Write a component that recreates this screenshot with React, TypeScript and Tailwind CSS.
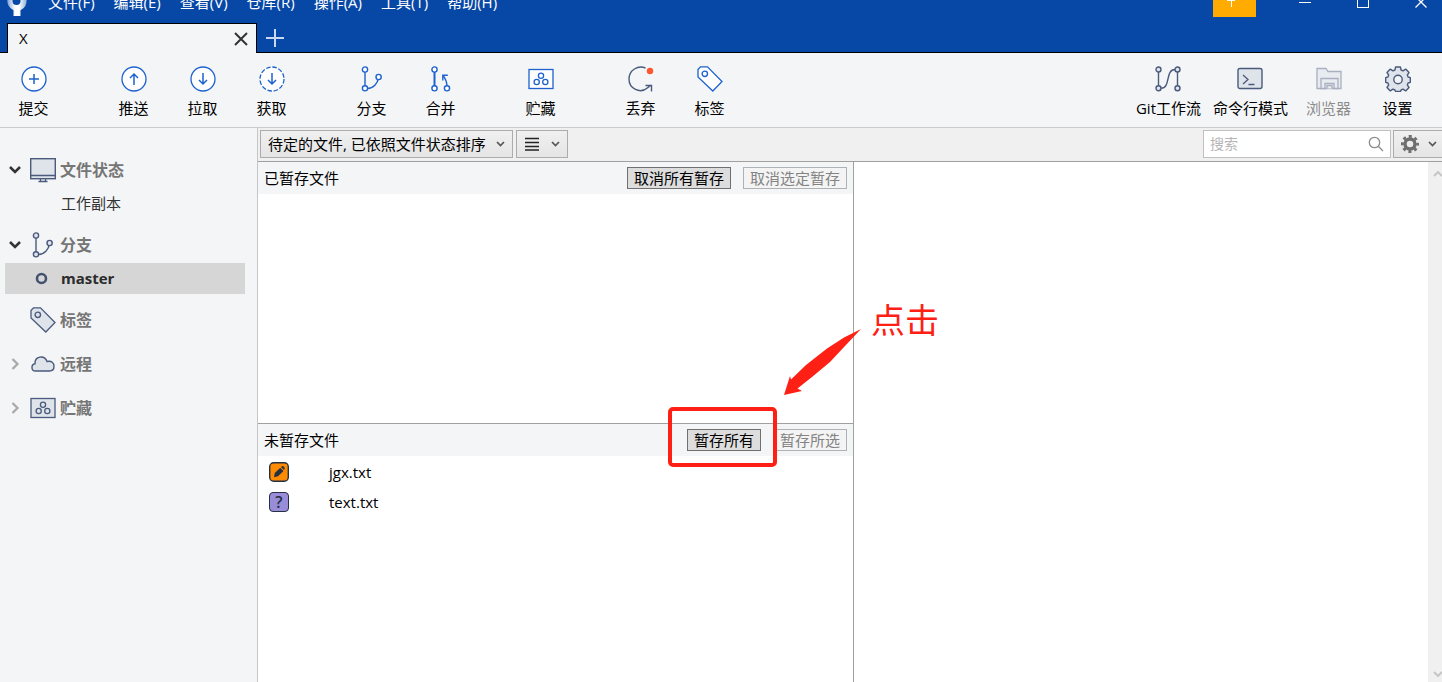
import type { ReactNode } from "react";

const BLUE = "#1e62cf";
const SLATE = "#4a5a7c";
const PALE = "#dfe3ea";

type IconProps = { color?: string; fill?: string };

function Svg({ children, size = 26 }: { children: ReactNode; size?: number }) {
  return (
    <svg width={size} height={size} viewBox={`0 0 ${size} ${size}`} fill="none" aria-hidden="true" className="shrink-0">
      {children}
    </svg>
  );
}

function CircleIcon({ d, dashed = false }: { d: string; dashed?: boolean }) {
  return (
    <Svg>
      <circle cx="13" cy="13" r="12" fill="#fff" stroke={BLUE} strokeWidth="1.3" strokeDasharray={dashed ? "4.5 1.78" : undefined} />
      <path d={d} stroke={BLUE} strokeWidth="1.5" />
    </Svg>
  );
}

function BranchIcon({ color = BLUE, fill = "#fff" }: IconProps) {
  return (
    <Svg>
      <g stroke={color} strokeWidth="1.4">
        <path d="M6 6v14M8.500 22.500c6 0 10-5 11-10.500" />
        <circle cx="6" cy="3.500" r="2.600" fill={fill} />
        <circle cx="6" cy="22.300" r="2.600" fill={fill} />
        <circle cx="19.600" cy="11" r="2.600" fill={fill} />
      </g>
    </Svg>
  );
}

function MergeIcon() {
  return (
    <Svg>
      <g stroke={BLUE} strokeWidth="1.4">
        <path d="M6.500 6v14" strokeWidth="2" />
        <path d="M19 20c-.2-4-1.500-7.500-4-10.500M14.800 14.500V9.300h5" />
        <circle cx="6.500" cy="3.500" r="2.600" fill="#fff" />
        <circle cx="6.500" cy="22.300" r="2.600" fill="#fff" />
        <circle cx="19" cy="22.300" r="2.600" fill="#fff" />
      </g>
    </Svg>
  );
}

function StashIcon({ color = BLUE, fill = "#fff" }: IconProps) {
  return (
    <Svg>
      <g stroke={color} strokeWidth="1.3">
        <rect x="1" y="3.500" width="24" height="19" fill={fill} />
        <circle cx="13" cy="9.700" r="2.600" />
        <circle cx="8.700" cy="16" r="2.600" />
        <circle cx="17.300" cy="16" r="2.600" />
      </g>
    </Svg>
  );
}

function DiscardIcon() {
  return (
    <Svg>
      <path d="M17.500 2C10-1 1 4 1 13c0 9.500 11 15.500 19 8.500l3-2.500M17.500 19.500h6v6" stroke={SLATE} strokeWidth="1.4" />
      <circle cx="22" cy="5" r="3.200" fill="#ff5630" />
    </Svg>
  );
}

function TagIcon({ color = BLUE, fill = "#fff" }: IconProps) {
  return (
    <Svg>
      <path d="M1 3.500 3.500.8h7L25 15.500 15.800 25 1 11z" fill={fill} stroke={color} strokeWidth="1.3" />
      <circle cx="7.800" cy="7.800" r="2.700" stroke={color} strokeWidth="1.400" />
    </Svg>
  );
}

function FlowIcon() {
  return (
    <Svg>
      <g stroke={SLATE} strokeWidth="1.4">
        <path d="M3.500 6v14M22.500 6v14M6 22.300c10 0 4-18.800 14-18.800" />
        <circle cx="3.500" cy="3.500" r="2.500" fill={PALE} />
        <circle cx="3.500" cy="22.300" r="2.500" fill={PALE} />
        <circle cx="22.500" cy="3.500" r="2.500" fill={PALE} />
        <circle cx="22.500" cy="22.300" r="2.500" fill={PALE} />
      </g>
    </Svg>
  );
}

function TerminalIcon() {
  return (
    <Svg>
      <rect x="1" y="2.500" width="24" height="20" rx="2" fill={PALE} stroke={SLATE} strokeWidth="1.4" />
      <path d="M6 9l5 4.500L6 18M11.500 18.500h6" stroke={SLATE} strokeWidth="1.3" />
    </Svg>
  );
}

function ExplorerIcon() {
  return (
    <Svg>
      <g fill="#e8ebf0" stroke="#a9b0bf" strokeWidth="1.3">
        <path d="M1 22.500V2.500h9l2 3h13v17z" />
        <path d="M5 22.500v-10h17v10h-4v-5h-9v5z" />
        <path d="M11 22.500v-3h5v3" />
      </g>
    </Svg>
  );
}

function CogIcon() {
  const d =
    "M10.600 1h4.800l.7 3 1.900.8 2.700-1.700 3.300 3.400-1.700 2.600.8 1.900 2.200.7v4.600l-2.200.7-.8 1.900 1.700 2.600-3.300 3.400-2.700-1.700-1.900.8-.7 1.500h-4.800l-.7-1.500-1.900-.8-2.700 1.700L2 21.500l1.700-2.600-.8-1.900-2.200-.7v-4.600l2.200-.7.8-1.900L2 6.500l3.300-3.400L8 4.800 9.900 4z";
  return (
    <Svg>
      <path d={d} fill={PALE} stroke={SLATE} strokeWidth="1.400" strokeLinejoin="round" />
      <circle cx="13" cy="13.500" r="4.200" fill="#f4f5f7" stroke={SLATE} strokeWidth="1.400" />
    </Svg>
  );
}

function MonitorIcon() {
  return (
    <Svg>
      <rect x=".7" y="1.700" width="24.600" height="20" fill={PALE} stroke={SLATE} strokeWidth="1.4" />
      <path d="M1 18.500h24M8.500 24.500h9M10.500 22v2M15.500 22v2" stroke={SLATE} strokeWidth="1.300" />
    </Svg>
  );
}

function CloudIcon() {
  return (
    <Svg>
      <path
        d="M5.500 20C1 20 .8 13.500 5 12.800 4.500 5 14.500 3.500 17 10.500c4.500-1.200 7.200 1.500 7 5 0 3-2 4.500-4.500 4.500z"
        fill={PALE}
        stroke={SLATE}
        strokeWidth="1.400"
      />
    </Svg>
  );
}

function Chevron({ open, small = false }: { open: boolean; small?: boolean }) {
  if (small) {
    return (
      <svg width="9" height="6" viewBox="0 0 9 6" fill="none" aria-hidden="true">
        <path d="M1 1l3.500 3.500L8 1" stroke="#555" strokeWidth="1.700" />
      </svg>
    );
  }
  return (
    <svg width="12" height="12" viewBox="0 0 12 12" fill="none" aria-hidden="true">
      {open ? (
        <path d="M1 3l5 5 5-5" stroke="#333" strokeWidth="2.500" />
      ) : (
        <path d="M3.500 1l5 5-5 5" stroke="#aaa" strokeWidth="2.300" />
      )}
    </svg>
  );
}

function Tool({ icon, label, disabled }: { icon: ReactNode; label: string; disabled?: boolean }) {
  return (
    <button
      type="button"
      disabled={disabled}
      className="flex min-w-[69px] flex-col items-center gap-[6px] whitespace-nowrap px-[6px] leading-5 text-black disabled:text-[#8c8c8c]"
    >
      {icon}
      <span>{label}</span>
    </button>
  );
}

function SideHeading({ icon, label, open }: { icon: ReactNode; label: string; open?: boolean }) {
  return (
    <button type="button" className="flex h-9 w-full items-center pl-[9px] text-base font-bold text-[#767676]">
      <span className="mr-[9px] w-3">{open !== undefined && <Chevron open={open} />}</span>
      {icon}
      <span className="ml-1">{label}</span>
    </button>
  );
}

const stageButton =
  "h-[22px] border border-[#707070] bg-[#dddddd] px-[6px] leading-5 text-black disabled:border-[#adb2b5] disabled:bg-[#f4f4f4] disabled:text-[#838383]";

const menus = ["文件(F)", "编辑(E)", "查看(V)", "仓库(R)", "操作(A)", "工具(T)", "帮助(H)"];

function TitleBar() {
  return (
    <div className="-mt-5 flex h-[43px] shrink-0 items-center text-white">
      <svg width="22" height="38" viewBox="0 0 22 38" className="ml-[6px]" aria-hidden="true">
        <defs>
          <linearGradient id="logo" x1="0" x2="1">
            <stop offset="0" stopColor="#7fa3d6" />
            <stop offset=".4" stopColor="#fff" />
            <stop offset=".6" stopColor="#fff" />
            <stop offset="1" stopColor="#8fb0dc" />
          </linearGradient>
        </defs>
        <path d="M10.500 8a10 10 0 0 1 4 19.200V33h-7v-5.800A10 10 0 0 1 10.500 8z" fill="url(#logo)" />
        <circle cx="10.500" cy="18" r="4" fill="#0747a6" />
      </svg>
      <nav className="ml-5 flex gap-[19px]">
        {menus.map((m) => (
          <button type="button" key={m} className="whitespace-nowrap leading-5">
            {m}
          </button>
        ))}
      </nav>
      <div className="ml-auto flex h-full items-center">
        <button type="button" aria-label="更新" className="mr-5 flex h-[37px] w-[43px] self-start bg-[#ffab00]">
          <svg width="43" height="37" viewBox="0 0 43 37" fill="none" aria-hidden="true">
            <path d="M18.500 27V12M14 20.500h8" stroke="#fff" />
          </svg>
        </button>
        <button type="button" aria-label="最小化" className="flex h-9 w-[58px] items-center justify-center">
          <svg width="12" height="12" aria-hidden="true"><path d="M0 6.500h12" stroke="#fff" /></svg>
        </button>
        <button type="button" aria-label="最大化" className="flex h-9 w-[58px] items-center justify-center">
          <svg width="12" height="12" fill="none" aria-hidden="true"><rect x=".5" y=".5" width="11" height="11" stroke="#fff" /></svg>
        </button>
        <button type="button" aria-label="关闭" className="-mr-[8px] flex h-9 w-[58px] items-center justify-center">
          <svg width="12" height="12" aria-hidden="true"><path d="M.5.5l11 11M11.500.5l-11 11" stroke="#fff" strokeWidth="1.300" /></svg>
        </button>
      </div>
    </div>
  );
}

function TabRow() {
  return (
    <div className="flex h-[30px] shrink-0">
      <div className="w-[7px] border-b border-black" />
      <div className="flex w-[250px] items-center justify-between border-x border-t border-black bg-[#f4f5f7] pl-[11px] pr-[8px]">
        <span>X</span>
        <button type="button" aria-label="关闭标签页">
          <svg width="14" height="14" aria-hidden="true"><path d="M1 1l12 12M13 1L1 13" stroke="#333" strokeWidth="2" /></svg>
        </button>
      </div>
      <div className="flex flex-1 items-center border-b border-black pl-[9px]">
        <button type="button" aria-label="新建标签页">
          <svg width="18" height="18" aria-hidden="true"><path d="M9 0v18M0 9h18" stroke="#c9d8ee" strokeWidth="2" /></svg>
        </button>
      </div>
    </div>
  );
}

function Toolbar() {
  return (
    <div className="flex shrink-0 justify-between border-b border-[#c9cbce] bg-[#f4f5f7] pb-[9px] pr-[10px] pt-[13px]">
      <div className="-ml-px flex gap-[31px]">
        <Tool icon={<CircleIcon d="M13 8v10M8 13h10" />} label="提交" />
        <div className="flex">
          <Tool icon={<CircleIcon d="M13 19V8M9 12l4-4 4 4" />} label="推送" />
          <Tool icon={<CircleIcon d="M13 7v11M9 14l4 4 4-4" />} label="拉取" />
          <Tool icon={<CircleIcon d="M13 7v11M9 14l4 4 4-4" dashed />} label="获取" />
        </div>
        <div className="flex">
          <Tool icon={<BranchIcon />} label="分支" />
          <Tool icon={<MergeIcon />} label="合并" />
        </div>
        <Tool icon={<StashIcon />} label="贮藏" />
        <div className="flex">
          <Tool icon={<DiscardIcon />} label="丢弃" />
          <Tool icon={<TagIcon />} label="标签" />
        </div>
      </div>
      <div className="flex">
        <Tool icon={<FlowIcon />} label="Git工作流" />
        <Tool icon={<TerminalIcon />} label="命令行模式" />
        <Tool icon={<ExplorerIcon />} label="浏览器" disabled />
        <Tool icon={<CogIcon />} label="设置" />
      </div>
    </div>
  );
}

function Sidebar() {
  return (
    <aside className="flex w-[258px] shrink-0 flex-col gap-2 border-r border-[#c4c6c9] bg-[#f4f5f7] pt-6">
      <div>
        <SideHeading icon={<MonitorIcon />} label="文件状态" open />
        <button type="button" className="flex h-[31px] items-center pl-[61px] text-[#333]">工作副本</button>
      </div>
      <div>
        <SideHeading icon={<BranchIcon color={SLATE} fill={PALE} />} label="分支" open />
        <button type="button" className="ml-[5px] flex h-[31px] w-[240px] items-center bg-[#d6d6d6] pl-[30px] font-bold text-[#2b2b2b]">
          <svg width="14" height="14" className="mr-3" aria-hidden="true">
            <circle cx="6.500" cy="6.500" r="4.500" fill="none" stroke="#43526e" strokeWidth="2.600" />
          </svg>
          master
        </button>
      </div>
      <SideHeading icon={<TagIcon color={SLATE} fill={PALE} />} label="标签" />
      <SideHeading icon={<CloudIcon />} label="远程" open={false} />
      <SideHeading icon={<StashIcon color={SLATE} fill={PALE} />} label="贮藏" open={false} />
    </aside>
  );
}

const dropButton = "border border-[#acacac] bg-gradient-to-b from-[#f0f0f0] to-[#e5e5e5]";

function FilterBar() {
  return (
    <div className="flex h-[34px] shrink-0 items-start border-b border-[#a0a0a0] bg-[#f0f0f0] pl-[2px] pt-[2px]">
      <div className="relative mr-[3px]">
        <select aria-label="文件排序" className={`${dropButton} h-7 w-[253px] appearance-none pl-[7px] text-black`}>
          <option>待定的文件, 已依照文件状态排序</option>
        </select>
        <span className="pointer-events-none absolute inset-y-0 right-2 flex items-center"><Chevron open small /></span>
      </div>
      <button type="button" aria-label="视图" className={`${dropButton} flex h-7 w-[52px] items-center justify-between pl-2 pr-[7px]`}>
        <svg width="14" height="14" aria-hidden="true"><path d="M0 1.500h14M0 5.500h14M0 9.500h14M0 13h14" stroke="#222" strokeWidth="1.300" /></svg>
        <Chevron open small />
      </button>
      <div className="ml-auto mr-[2px] flex h-7 w-[188px] items-center border border-[#c0c0c0] bg-white pl-[6px] pr-[6px]">
        <input type="search" aria-label="搜索" placeholder="搜索" className="w-full min-w-0 text-sm outline-none placeholder:text-[#b5b5b5]" />
        <svg width="16" height="16" fill="none" aria-hidden="true" className="shrink-0">
          <circle cx="6.500" cy="6.500" r="5.200" stroke="#8c8c8c" strokeWidth="1.300" />
          <path d="M10.300 10.300L15 15" stroke="#8c8c8c" strokeWidth="1.300" />
        </svg>
      </div>
      <button type="button" aria-label="选项" className="flex h-7 w-[49px] items-center justify-between border-y border-l border-[#acacac] bg-gradient-to-b from-[#f0f0f0] to-[#e5e5e5] pl-[7px] pr-[5px]">
        <svg width="18" height="18" fill="none" aria-hidden="true">
          <circle cx="9" cy="9" r="5" stroke="#6e6e6e" strokeWidth="3.400" />
          <circle cx="9" cy="9" r="7.600" stroke="#6e6e6e" strokeWidth="2.800" strokeDasharray="3 2.970" strokeDashoffset="1.500" />
        </svg>
        <Chevron open small />
      </button>
    </div>
  );
}

function ClickHint() {
  return (
    <div className="pointer-events-none absolute -bottom-4 -left-[19px] -right-4 -top-[22px] z-10 rounded-[5px] border-4 border-[#ff2015]">
      <svg width="78" height="67" viewBox="0 0 78 67" className="absolute -top-[82px] left-[112px]" aria-hidden="true">
        <path d="M77 0L60 8.500 43 19.500 22 36 7 50.500 6 47 0 66l18-4-4.500-2.500L28 48 46 33 61 17z" fill="#ff2015" />
      </svg>
      <span className="absolute -top-[111px] left-[199px] whitespace-nowrap text-[34px] leading-[40px] text-[#ff2015]">点击</span>
    </div>
  );
}

function ModifiedBadge() {
  return (
    <Svg size={20}>
      <rect x=".7" y=".7" width="18.600" height="18.600" rx="4" fill="#ff8b00" stroke="#253045" strokeWidth="1.400" />
      <path d="M5 15.200l.8-4.200 5.500-5.300 3.200 3.200-5.500 5.300zM12 5l.8-.7q1-.6 2.200.5t.6 2.300l-.6.8z" fill="#253045" />
    </Svg>
  );
}

function UntrackedBadge() {
  return (
    <span className="flex size-5 items-center justify-center rounded-[4px] border border-[#253045] bg-[#998dd9] text-base font-semibold leading-5 text-[#253045]">
      ?
    </span>
  );
}

function FileRow({ badge, name }: { badge: ReactNode; name: string }) {
  return (
    <li className="flex h-[30px] items-center gap-10 pl-[11px]">
      {badge}
      {name}
    </li>
  );
}

const paneHeader = "flex h-8 items-center gap-3 bg-[#f4f5f7] pl-[6px] pr-[6px]";

function Workspace() {
  return (
    <div className="grid min-h-0 flex-1 grid-cols-[596fr_588fr]">
      <div className="grid grid-rows-[262fr_258fr] border-r border-[#a0a0a0]">
        <section className="border-b border-[#a0a0a0]">
          <header className={paneHeader}>
            <h2 className="mr-auto">已暂存文件</h2>
            <button type="button" className={stageButton}>取消所有暂存</button>
            <button type="button" disabled className={stageButton}>取消选定暂存</button>
          </header>
        </section>
        <section>
          <header className={paneHeader}>
            <h2 className="mr-auto">未暂存文件</h2>
            <div className="relative flex">
              <button type="button" className={stageButton}>暂存所有</button>
              <ClickHint />
            </div>
            <button type="button" disabled className={stageButton}>暂存所选</button>
          </header>
          <ul className="pt-px">
            <FileRow badge={<ModifiedBadge />} name="jgx.txt" />
            <FileRow badge={<UntrackedBadge />} name="text.txt" />
          </ul>
        </section>
      </div>
      <div className="flex justify-end">
        <div className="flex w-[14px] flex-col justify-between overflow-hidden bg-[#f0f0f0] pb-1 pl-[5px] pt-2">
          <svg width="10" height="7" fill="none" aria-hidden="true"><path d="M1 6l4-4 4 4" stroke="#c4c4c4" strokeWidth="1.800" /></svg>
          <svg width="10" height="7" fill="none" aria-hidden="true"><path d="M1 1l4 4 4-4" stroke="#c4c4c4" strokeWidth="1.800" /></svg>
        </div>
      </div>
    </div>
  );
}

export default function App() {
  return (
    <div className="flex h-screen flex-col overflow-hidden bg-white font-['Open_Sans','Noto_Sans_CJK_SC',sans-serif] text-[15px] text-black">
      <div className="flex shrink-0 flex-col overflow-hidden bg-[#0747a6]">
        <TitleBar />
        <TabRow />
      </div>
      <Toolbar />
      <div className="flex min-h-0 flex-1">
        <Sidebar />
        <main className="flex min-w-0 flex-1 flex-col">
          <FilterBar />
          <Workspace />
        </main>
      </div>
    </div>
  );
}
